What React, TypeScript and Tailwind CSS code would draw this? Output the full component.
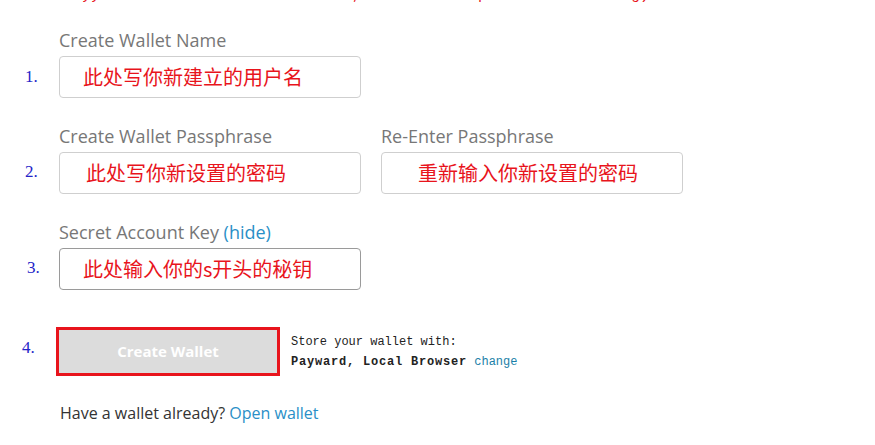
import React from 'react';

const cjk = "font-['Noto_Sans_CJK_SC',sans-serif]";
const sans = "font-['Open_Sans',sans-serif]";
const serifNum = "font-['Liberation_Serif',serif] text-[17px] text-[#2323c8]";
const mono = "font-['Liberation_Mono','Noto_Sans_CJK_SC',monospace]";

function Field({ text, indent = 'pl-[23px]', dark = false }: { text: string; indent?: string; dark?: boolean }) {
    return (
        <div
            className={`flex h-[42px] w-[302px] items-center rounded-[4px] border bg-white ${indent} ${
                dark ? 'border-[#9a9a9a]' : 'border-[#cfcfcf]'
            }`}
        >
            <span className={`${cjk} text-[20px] leading-none text-[#e8141c]`}>{text}</span>
        </div>
    );
}

function Label({ children }: { children: React.ReactNode }) {
    return <div className={`${sans} text-[18px] leading-[24px] text-[#777777]`}>{children}</div>;
}

export default function App() {
    return (
        <div className="h-[445px] w-[875px] overflow-hidden bg-white">
            {/* ligne rouge coupée en haut */}
            <div className="h-[5px] overflow-hidden">
                <div className={`${mono} -mt-[12px] whitespace-pre pl-[82px] text-[15px] leading-[16px] text-[#e8141c]`}>
                    {'yy                            ,             p                g)'}
                </div>
            </div>

            {/* 1. nom */}
            <div className="mt-[23px] pl-[59px]">
                <Label>Create Wallet Name</Label>
            </div>
            <div className="mt-[4px] flex items-center">
                <div className={`${serifNum} w-[59px] pl-[25px]`}>1.</div>
                <Field text="此处写你新建立的用户名" />
            </div>

            {/* 2. passphrase */}
            <div className="mt-[26px] flex gap-[20px] pl-[59px]">
                <div className="w-[302px]">
                    <Label>Create Wallet Passphrase</Label>
                </div>
                <Label>Re-Enter Passphrase</Label>
            </div>
            <div className="mt-[4px] flex items-center">
                <div className={`${serifNum} w-[59px] pb-[3px] pl-[25px]`}>2.</div>
                <div className="flex gap-[20px]">
                    <Field text="此处写你新设置的密码" indent="pl-[26px]" />
                    <Field text="重新输入你新设置的密码" indent="pl-[36px]" />
                </div>
            </div>

            {/* 3. secret key */}
            <div className="mt-[26px] pl-[59px]">
                <Label>
                    Secret Account Key <span className="text-[#2a8fc7]">(hide)</span>
                </Label>
            </div>
            <div className="mt-[4px] flex items-center">
                <div className={`${serifNum} w-[59px] pb-[3px] pl-[27px]`}>3.</div>
                <Field text="此处输入你的s开头的秘钥" dark />
            </div>

            {/* 4. bouton */}
            <div className="mt-[37px] flex items-start">
                <div className={`${serifNum} w-[56px] pl-[22px] pt-[8px]`}>4.</div>
                <div className="flex h-[49px] w-[224px] items-center justify-center border-[3px] border-[#e8141c] bg-[#dcdcdc]">
                    <span className={`${sans} text-[15px] font-bold text-white`}>Create Wallet</span>
                </div>
                <div className={`${mono} ml-[11px] pt-[5px] text-[12px] leading-[20px] text-[#222]`}>
                    <div>Store your wallet with:</div>
                    <div>
                        <span className="font-bold tracking-[0.8px]">Payward, Local Browser</span>{' '}
                        <span className="text-[#1a7fa8]">change</span>
                    </div>
                </div>
            </div>

            <div className={`${sans} mt-[25px] pl-[60px] text-[16px] text-[#333]`}>
                Have a wallet already? <span className="text-[#2a8fc7]">Open wallet</span>
            </div>
        </div>
    );
}
